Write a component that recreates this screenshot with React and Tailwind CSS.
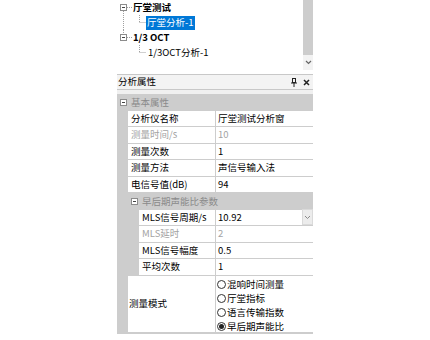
const FONT = { fontFamily: '"Noto Sans CJK SC", "Noto Sans", sans-serif' }

function MinusBox() {
  return (
    <svg width="7" height="7" viewBox="0 0 7 7" className="shrink-0">
      <rect x="0.5" y="0.5" width="6" height="6" fill="#fff" stroke="#8c8c8c" />
      <line x1="2" y1="3.5" x2="5" y2="3.5" stroke="#444" />
    </svg>
  )
}

function TreeRoot({ label, lineUp, lineDown }) {
  return (
    <div className="flex h-[15px] items-center">
      <svg width="16" height="15" viewBox="0 0 16 15" className="shrink-0">
        {lineUp && <line x1="6.5" y1="0" x2="6.5" y2="4" stroke="#a0a0a0" strokeDasharray="1 1" />}
        {lineDown && <line x1="6.5" y1="11" x2="6.5" y2="15" stroke="#a0a0a0" strokeDasharray="1 1" />}
        <rect x="3.5" y="4.5" width="6" height="6" fill="#fff" stroke="#8c8c8c" />
        <line x1="5" y1="7.5" x2="8" y2="7.5" stroke="#444" />
        <line x1="10" y1="7.5" x2="15" y2="7.5" stroke="#a0a0a0" strokeDasharray="1 1" />
      </svg>
      <span className="text-[9.5px] font-bold leading-none text-black">{label}</span>
    </div>
  )
}

function TreeChild({ label, rootLine, selected }) {
  return (
    <div className="flex h-[15px] items-center">
      <svg width="29" height="15" viewBox="0 0 29 15" className="shrink-0">
        {rootLine && <line x1="6.5" y1="0" x2="6.5" y2="15" stroke="#a0a0a0" strokeDasharray="1 1" />}
        <line x1="22.5" y1="-2" x2="22.5" y2="7.5" stroke="#a0a0a0" strokeDasharray="1 1" />
        <line x1="22.5" y1="7.5" x2="29" y2="7.5" stroke="#a0a0a0" strokeDasharray="1 1" />
      </svg>
      {selected ? (
        <span className="flex h-[14px] items-center bg-[#0078d7] px-[1px] text-[9.5px] leading-none text-white">{label}</span>
      ) : (
        <span className="ml-[2px] text-[9.5px] leading-none text-black">{label}</span>
      )}
    </div>
  )
}

function Category({ label, nested }) {
  return (
    <div className={`flex h-[16.5px] items-center gap-[4px] bg-[#cdcdcd] ${nested ? 'pl-[14px]' : 'pl-[3px]'}`}>
      <MinusBox />
      <span className="text-[9.5px] leading-none text-[#8a8a8a]">{label}</span>
    </div>
  )
}

function Row({ label, value, nested, disabled, dropdown }) {
  const color = disabled ? 'text-[#a3a3a3]' : 'text-black'
  return (
    <div className="flex h-[16.5px]">
      <div className={`shrink-0 bg-[#cdcdcd] ${nested ? 'w-[22px]' : 'w-[11px]'}`} />
      <div className="flex flex-1 border-b border-[#cdcdcd] bg-white">
        <div className={`flex items-center border-r border-[#cdcdcd] pl-[3px] ${nested ? 'w-[77px]' : 'w-[88px]'}`}>
          <span className={`text-[9.5px] leading-none ${color}`}>{label}</span>
        </div>
        <div className="flex flex-1 items-center pl-[2px]">
          <span className={`flex-1 text-[9.5px] leading-none ${color}`}>{value}</span>
          {dropdown && (
            <div className="flex h-[16px] w-[11px] items-center justify-center border border-[#dadada] bg-[#ececec]">
              <svg width="7" height="5" viewBox="0 0 7 5">
                <path d="M1 1 L3.5 3.5 L6 1" fill="none" stroke="#8a8a8a" strokeWidth="1" />
              </svg>
            </div>
          )}
        </div>
      </div>
    </div>
  )
}

function Radio({ label, checked }) {
  return (
    <div className="flex h-[14px] items-center">
      <span className="flex h-[9px] w-[9px] items-center justify-center rounded-full border border-[#333] bg-white">
        {checked && <span className="h-[5px] w-[5px] rounded-full bg-[#222]" />}
      </span>
      <span className="ml-[1px] text-[9.5px] leading-none text-black">{label}</span>
    </div>
  )
}

export default function App() {
  return (
    <div className="h-[340px] w-[430px] bg-white" style={FONT}>
      <div className="mx-auto w-[196px]">
        {/* tree */}
        <div className="flex h-[74px]">
          <div className="flex-1">
            <TreeRoot label="厅堂测试" lineDown />
            <TreeChild label="厅堂分析-1" rootLine selected />
            <TreeRoot label="1/3 OCT" lineUp />
            <TreeChild label="1/3OCT分析-1" />
          </div>
          <div className="flex h-[70px] w-[10px] flex-col">
            <div className="h-[55px] bg-[#cdcdcd]" />
            <div className="flex flex-1 items-center justify-center bg-[#f3f3f3]">
              <svg width="7" height="5" viewBox="0 0 7 5">
                <path d="M1 1 L3.5 3.5 L6 1" fill="none" stroke="#666" strokeWidth="1.2" />
              </svg>
            </div>
          </div>
        </div>

        {/* properties header */}
        <div className="flex h-[16px] items-center border-t border-b border-[#c8c8c8] bg-[#f3f3f3] pl-[1px] pr-[3px]">
          <span className="flex-1 text-[9.5px] leading-none text-black">分析属性</span>
          <svg width="8" height="9" viewBox="0 0 8 9" className="mr-[5px]">
            <rect x="2.5" y="0.5" width="3" height="4" fill="none" stroke="#222" />
            <line x1="1" y1="5" x2="7" y2="5" stroke="#222" />
            <line x1="4" y1="5" x2="4" y2="9" stroke="#222" />
          </svg>
          <svg width="7" height="7" viewBox="0 0 7 7">
            <path d="M1 1 L6 6 M6 1 L1 6" stroke="#222" strokeWidth="1.5" />
          </svg>
        </div>
        <div className="h-[4px] bg-[#f0f0f0]" />

        {/* grid */}
        <Category label="基本属性" />
        <Row label="分析仪名称" value="厅堂测试分析窗" />
        <Row label="测量时间/s" value="10" disabled />
        <Row label="测量次数" value="1" />
        <Row label="测量方法" value="声信号输入法" />
        <Row label="电信号值(dB)" value="94" />
        <Category label="早后期声能比参数" nested />
        <Row label="MLS信号周期/s" value="10.92" nested dropdown />
        <Row label="MLS延时" value="2" nested disabled />
        <Row label="MLS信号幅度" value="0.5" nested />
        <Row label="平均次数" value="1" nested />
        <div className="flex h-[58px] border-b-2 border-[#cdcdcd]">
          <div className="w-[11px] shrink-0 bg-[#cdcdcd]" />
          <div className="flex w-[88px] items-center border-r border-[#cdcdcd] pl-[1px]">
            <span className="text-[9.5px] leading-none text-black">测量模式</span>
          </div>
          <div className="flex-1 pl-[1px] pt-[2px]">
            <Radio label="混响时间测量" />
            <Radio label="厅堂指标" />
            <Radio label="语言传输指数" />
            <Radio label="早后期声能比" checked />
          </div>
        </div>
      </div>
    </div>
  )
}
